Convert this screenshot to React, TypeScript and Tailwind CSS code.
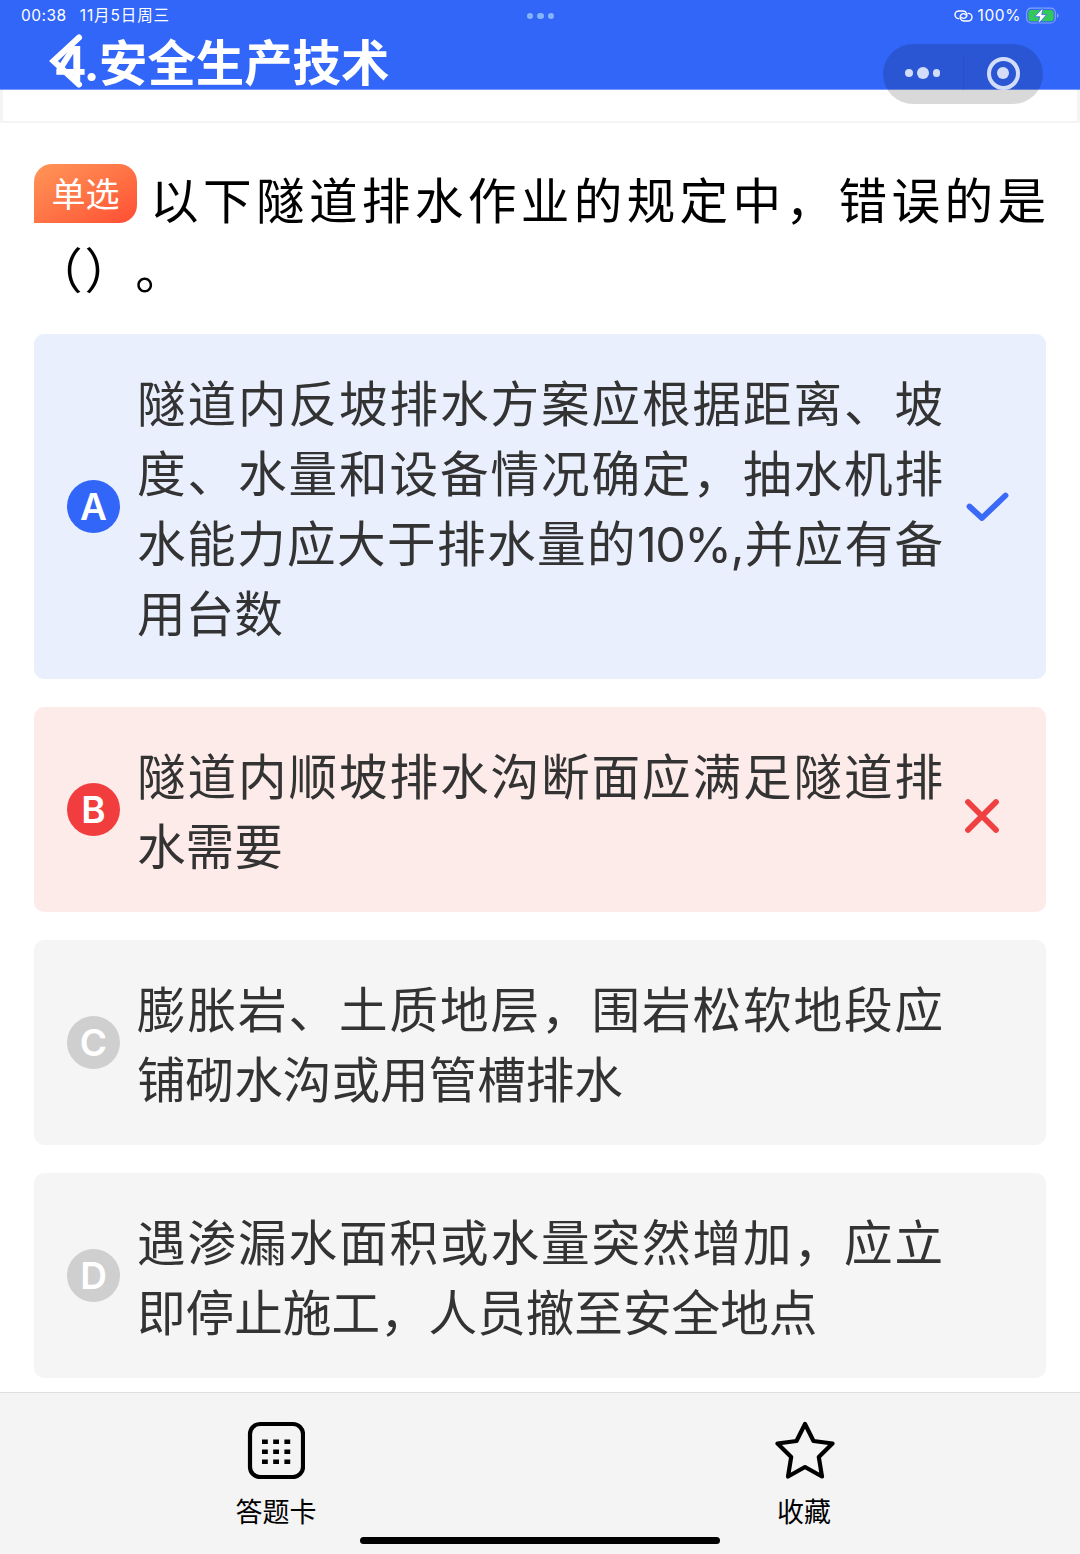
import React from 'react';
import clsx from 'clsx';

type OptionStatus = 'correct' | 'wrong' | 'idle';

interface Option {
  key: string;
  status: OptionStatus;
  lines: string[];
}

const options: Option[] = [
  {
    key: 'A',
    status: 'correct',
    lines: [
      '隧道内反坡排水方案应根据距离、坡',
      '度、水量和设备情况确定，抽水机排',
      '水能力应大于排水量的10%,并应有备',
      '用台数',
    ],
  },
  { key: 'B', status: 'wrong', lines: ['隧道内顺坡排水沟断面应满足隧道排', '水需要'] },
  { key: 'C', status: 'idle', lines: ['膨胀岩、土质地层，围岩松软地段应', '铺砌水沟或用管槽排水'] },
  { key: 'D', status: 'idle', lines: ['遇渗漏水面积或水量突然增加，应立', '即停止施工，人员撤至安全地点'] },
];

const StatusBar: React.FC = () => (
  <div className="flex h-8 items-center justify-between pl-[21px] pr-5 text-[15.5px] tracking-[0.5px] text-white">
    <div className="flex w-[300px] gap-[13px] whitespace-nowrap">
      <span>00:38</span>
      <span className="tracking-[0.9px]">11月5日周三</span>
    </div>
    <div className="flex gap-1">
      {[0, 1, 2].map((i) => (
        <span key={i} className="size-[6.5px] rounded-full bg-[#84b4fc]" />
      ))}
    </div>
    <div className="flex w-[300px] items-center justify-end">
      <svg width="19" height="12" viewBox="0 0 19 12" fill="none" stroke="white" strokeWidth="1.4" strokeLinecap="round">
        <path d="M4.8 8.6A3.8 3.8 0 0 1 4.8 1h4.4a3.8 3.8 0 0 1 2.6 6.5c-1.2 1.1-3.6 1.3-4.3-.2" />
        <path d="M14.2 3.4a3.8 3.8 0 0 1 0 7.6H9.8a3.8 3.8 0 0 1-2.6-6.5c1.2-1.1 3.6-1.3 4.3.2" />
      </svg>
      <span className="ml-[5px] tracking-[0.6px]">100%</span>
      <svg className="ml-[5px]" width="34" height="18" viewBox="0 0 34 18">
        <rect x="0.7" y="1.2" width="28.6" height="14.8" rx="4.5" fill="none" stroke="#84a4fb" strokeWidth="1.2" />
        <rect x="2.4" y="2.9" width="25.2" height="11.4" rx="3" fill="#34c759" />
        <path d="M31 6.2v4.8c1-.4 1.5-1.3 1.5-2.4s-.5-2-1.5-2.4z" fill="#84a4fb" />
        <path d="M17.3 .6 8.6 9.7h5.2L12 17.2 20.7 7.6h-5z" fill="white" stroke="#3267f7" strokeWidth="0.8" />
      </svg>
    </div>
  </div>
);

const Capsule: React.FC = () => (
  <div className="absolute left-[883px] top-11 z-10 flex h-[60px] w-40 items-center rounded-full bg-black/15">
    <div className="flex flex-1 items-center justify-center gap-1 pb-0.5">
      <span className="size-[7.5px] rounded-full bg-[#d3ddfa]" />
      <span className="size-3 rounded-full bg-[#d3ddfa]" />
      <span className="size-[7.5px] rounded-full bg-[#d3ddfa]" />
    </div>
    <div className="h-9 w-px bg-black/5" />
    <div className="flex flex-1 justify-center pb-0.5">
      <div className="flex size-[33px] items-center justify-center rounded-full border-4 border-[#d3ddfa]">
        <span className="size-3 rounded-full bg-[#d3ddfa]" />
      </div>
    </div>
  </div>
);

const Header: React.FC = () => (
  <header className="relative h-[90px] border-b border-[#7397fa] bg-[#3266f8]">
    <StatusBar />
    <h1 className="flex pl-[54px] pt-[1.5px] text-[48.4px] font-bold leading-[60px] text-white">
      <span className="w-[45px] tracking-[-1.5px]">4.</span>
      <span>安全生产技术</span>
    </h1>
    <svg className="absolute left-[49px] top-[33px]" width="36" height="56" viewBox="0 0 36 56" fill="none">
      <path d="M30 4.5 4.5 28 30 51.500" stroke="white" strokeWidth="6" strokeLinecap="round" />
    </svg>
    <Capsule />
  </header>
);

const lineClass = 'h-[70px] whitespace-nowrap leading-[70px]';

const badgeColor: Record<OptionStatus, string> = {
  correct: 'bg-[#3266f8]',
  wrong: 'bg-[#f23d3e]',
  idle: 'bg-[#d0cfd0]',
};

const cardColor: Record<OptionStatus, string> = {
  correct: 'bg-[#eaeffe]',
  wrong: 'bg-[#fdebea]',
  idle: 'bg-[#f5f5f5]',
};

const OptionCard: React.FC<{ option: Option }> = ({ option }) => (
  <div className={clsx('flex items-center rounded-[10px] pb-[29.5px] pl-[33px] pt-[35.5px]', cardColor[option.status])}>
    <div
      className={clsx(
        '-mt-1.5 flex size-[53px] shrink-0 items-center justify-center rounded-full text-[37px] font-semibold text-white',
        badgeColor[option.status],
      )}
    >
      {option.key}
    </div>
    <div className="ml-[17px] w-[806px] shrink-0 text-[48.6px] text-[#333333]">
      {option.lines.map((line, i) => (
        <p key={line} className={clsx(lineClass, i < option.lines.length - 1 && '[text-align-last:justify]')}>
          {line.split(/([0-9%,]+)/).map((part, j) =>
            j % 2 ? (
              <span key={j} className="tracking-[-1.5px]">
                {part}
              </span>
            ) : (
              part
            ),
          )}
        </p>
      ))}
    </div>
    {option.status === 'correct' && (
      <svg className="-mt-[5px] ml-[23px]" width="44" height="30" viewBox="0 0 44 30" fill="none">
        <path d="M3.5 14.5 16 26 39.5 3.5" stroke="#3c6af8" strokeWidth="5.8" strokeLinecap="round" strokeLinejoin="round" />
      </svg>
    )}
    {option.status === 'wrong' && (
      <svg className="ml-[21px] mt-[6px]" width="36" height="36" viewBox="0 0 36 36" fill="none">
        <path d="M4 4l28 28M32 4 4 32" stroke="#f04142" strokeWidth="5.8" strokeLinecap="round" />
      </svg>
    )}
  </div>
);

const Question: React.FC = () => (
  <div className="text-[48.6px] text-black">
    <div className="flex items-start">
      <span className="-mt-[3px] flex h-[59px] w-[103px] items-center justify-center rounded-[18px] rounded-bl-none bg-linear-to-br from-[#ff9558] to-[#ff4c33] pt-0.5 text-[34px] text-white">
        单选
      </span>
      <p className={clsx(lineClass, 'ml-[13px] w-[896px] [text-align-last:justify]')}>
        以下隧道排水作业的规定中，错误的是
      </p>
    </div>
    <p className={clsx(lineClass, 'tracking-[2px]')}>（）。</p>
  </div>
);

const TabBar: React.FC = () => (
  <footer className="relative flex h-[162px] border-t border-[#dedede] bg-[#f4f4f4] text-[27px] text-black">
    <div className="flex w-[552px] flex-col items-center pt-7">
      <svg width="58" height="58" viewBox="0 0 58 58">
        <rect x="3" y="3" width="53" height="53" rx="10" fill="none" stroke="black" strokeWidth="4.2" />
        {[18.5, 28.5, 38.5].map((y) =>
          [15, 26.2, 37.4].map((x) => <rect key={`${x}-${y}`} x={x} y={y} width="5.8" height="4.5" />),
        )}
      </svg>
      <span className="mt-[14px] leading-[40px]">答题卡</span>
    </div>
    <div className="flex w-[504px] flex-col items-center pt-7">
      <svg className="ml-0.5" width="60" height="58" viewBox="0 0 60 58" fill="none">
        <path
          d="M30 3 38.500 20 57.500 22.500 43.800 36 47 55.500 30 46 13 55.500 16.200 36 2.500 22.500 21.500 20z"
          stroke="black"
          strokeWidth="4.2"
          strokeLinejoin="round"
        />
      </svg>
      <span className="mt-[14px] leading-[40px]">收藏</span>
    </div>
    {/* home indicator */}
    <div className="absolute left-[360px] top-[144px] h-[7px] w-[360px] rounded-full bg-black" />
  </footer>
);

export default function App() {
  return (
    <div className="flex h-[1554px] w-[1080px] flex-col overflow-hidden bg-white font-['Inter','Noto_Sans_CJK_SC',sans-serif] [text-spacing-trim:space-all]">
      <Header />
      <div className="h-[33px] border-x-[3px] border-b-2 border-[#f4f4f4]" />
      <main className="flex flex-1 flex-col px-[34px] pt-11">
        <Question />
        <div className="mt-[27px] flex flex-col gap-7">
          {options.map((option) => (
            <OptionCard key={option.key} option={option} />
          ))}
        </div>
      </main>
      <TabBar />
    </div>
  );
}
